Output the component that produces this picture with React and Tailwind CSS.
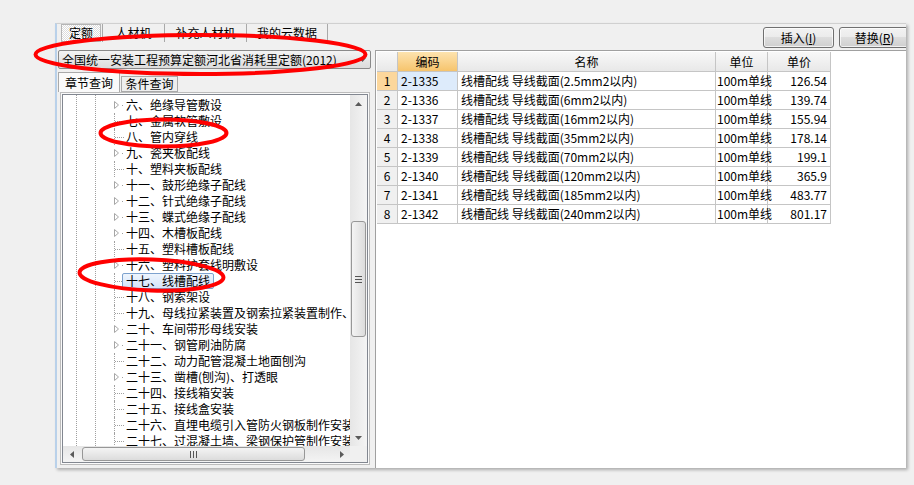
import React from "react";

const treeItems = [
  ["六、绝缘导管敷设", 1],
  ["七、金属软管敷设", 0],
  ["八、管内穿线", 0],
  ["九、瓷夹板配线", 1],
  ["十、塑料夹板配线", 0],
  ["十一、鼓形绝缘子配线", 1],
  ["十二、针式绝缘子配线", 1],
  ["十三、蝶式绝缘子配线", 1],
  ["十四、木槽板配线", 1],
  ["十五、塑料槽板配线", 0],
  ["十六、塑料护套线明敷设", 1],
  ["十七、线槽配线", 0, 1],
  ["十八、钢索架设", 0],
  ["十九、母线拉紧装置及钢索拉紧装置制作、", 0],
  ["二十、车间带形母线安装", 1],
  ["二十一、钢管刷油防腐", 1],
  ["二十二、动力配管混凝土地面刨沟", 0],
  ["二十三、凿槽(刨沟)、打透眼", 1],
  ["二十四、接线箱安装", 0],
  ["二十五、接线盒安装", 0],
  ["二十六、直埋电缆引入管防火钢板制作安装", 0],
  ["二十七、过混凝土墙、梁钢保护管制作安装", 0],
];

const rows = [
  ["2-1335", "线槽配线 导线截面(2.5mm2以内)", "126.54"],
  ["2-1336", "线槽配线 导线截面(6mm2以内)", "139.74"],
  ["2-1337", "线槽配线 导线截面(16mm2以内)", "155.94"],
  ["2-1338", "线槽配线 导线截面(35mm2以内)", "178.14"],
  ["2-1339", "线槽配线 导线截面(70mm2以内)", "199.1"],
  ["2-1340", "线槽配线 导线截面(120mm2以内)", "365.9"],
  ["2-1341", "线槽配线 导线截面(185mm2以内)", "483.77"],
  ["2-1342", "线槽配线 导线截面(240mm2以内)", "801.17"],
];

function Tri({ dir }) {
  const pts = {
    up: "0,4 3.5,0 7,4",
    down: "0,0 3.5,4 7,0",
    left: "4,0 0,3.5 4,7",
    right: "0,0 4,3.5 0,7",
  }[dir];
  const w = dir === "up" || dir === "down" ? 7 : 4;
  const h = dir === "up" || dir === "down" ? 4 : 7;
  return (
    <svg width={w} height={h} viewBox={`0 0 ${w} ${h}`}>
      <polygon points={pts} fill="#5a5a5a" />
    </svg>
  );
}

function TreeRow({ text, exp, sel }) {
  return (
    <div className="flex h-[16px] items-center whitespace-nowrap">
      {exp ? (
        <div className="w-[12px] h-[16px] shrink-0">
          <svg width="12" height="16" viewBox="0 0 12 16">
            <polygon points="-0.5,4.5 3.5,8 -0.5,11.5" transform="translate(1,0)" fill="#fff" stroke="#a6a6a6" strokeWidth="1" />
            <rect x="8" y="8" width="1" height="1" fill="#a0a0a0" />
          </svg>
        </div>
      ) : (
        <div className="w-[12px] h-[16px] shrink-0 border-l border-dotted border-[#a0a0a0] flex items-center">
          <div className="w-[9px] border-t border-dotted border-[#a0a0a0]" />
        </div>
      )}
      <span
        className={
          "-ml-[4px] h-[16px] px-[3px] leading-[14px] border rounded-[2px] " +
          (sel
            ? "border-[#7da2ce] bg-linear-to-b from-[#eef5fd] to-[#d5e5fa]"
            : "border-transparent")
        }
      >
        {text}
      </span>
    </div>
  );
}

function Btn({ children }) {
  return (
    <div className="w-[71px] h-[21px] shrink-0 border border-[#707070] rounded-[3px] bg-[linear-gradient(#f2f2f2,#ebebeb_50%,#dddddd_50%,#cfcfcf)] flex items-center justify-center leading-[14px] shadow-[inset_0_0_0_1px_rgba(255,255,255,0.7)]">
      {children}
    </div>
  );
}

export default function App() {
  return (
    <div className="relative w-[914px] h-[485px] overflow-hidden bg-[#f0f0f0] pt-[23px] pl-[55px] text-[12px] text-black font-['Noto_Sans_CJK_SC',sans-serif]">
      <div className="w-[851px] h-[445px] bg-[#f0f0f0] border-l-2 border-l-[#b9d1ea] border-t border-t-[#d0d0d0] shadow-[2px_2px_3px_rgba(0,0,0,0.28)] flex">
        {/* Left column */}
        <div className="w-[315px] shrink-0 flex flex-col">
          {/* tabs */}
          <div className="flex ml-[4px] h-[18px]">
            <div className="w-[40px] h-[18px] border border-[#b5b5b5] bg-[image:repeating-conic-gradient(#dcdcdc_0%_25%,#ffffff_0%_50%)] bg-[length:2px_2px] flex items-center justify-center leading-[14px]">
              定额
            </div>
            <div className="ml-[1px] w-[63px] border-l border-r border-[#a9a9a9] flex items-center justify-center leading-[14px]">
              人材机
            </div>
            <div className="w-[82px] border-r border-[#a9a9a9] flex items-center justify-center leading-[14px]">
              补充人材机
            </div>
            <div className="w-[81px] border-r border-[#a9a9a9] flex items-center justify-center leading-[14px]">
              我的云数据
            </div>
          </div>
          {/* dropdown */}
          <div className="mt-[8px] ml-[1px] w-[313px] h-[19px] border border-[#8a8a8a] rounded-[2px] bg-linear-to-b from-[#f4f4f4] to-[#dcdcdc] flex items-center pl-[3px] pr-[4px] leading-[14px]">
            <span className="flex-1 whitespace-nowrap">全国统一安装工程预算定额河北省消耗里定额(2012)</span>
            <Tri dir="down" />
          </div>
          {/* sub tabs */}
          <div className="mt-[3px] ml-[1px] h-[20px] flex items-end">
            <div className="w-[62px] h-[20px] border border-b-0 border-[#a9a9a9] bg-[#fafafa] flex items-center justify-center leading-[14px]">
              章节查询
            </div>
            <div className="ml-[1px] w-[57px] h-[16px] border border-[#a9a9a9] bg-[#eeeeee] flex items-center justify-center leading-[14px]">
              条件查询
            </div>
          </div>
          {/* tree panel */}
          <div className="ml-[3px] w-[310px] h-[373px] border border-[#bcbcbc] bg-[#fafafa] p-[1px]">
            <div className="h-full border border-[#828790] bg-white flex flex-col">
              <div className="flex-1 flex min-h-0">
                {/* content */}
                <div className="flex-1 min-w-0 overflow-hidden flex">
                  <div className="w-[13px] shrink-0" />
                  <div className="w-[19px] shrink-0 border-l border-dotted border-[#a0a0a0]" />
                  <div className="w-[19px] shrink-0 border-l border-dotted border-[#a0a0a0]" />
                  <div className="flex-1 min-w-0 pt-[2px] flex flex-col">
                    {treeItems.map(([t, e, s], i) => (
                      <TreeRow key={i} text={t} exp={e} sel={s} />
                    ))}
                  </div>
                </div>
                {/* vertical scrollbar */}
                <div className="w-[17px] shrink-0 bg-linear-to-r from-[#e6e6e6] to-[#f4f4f4] flex flex-col">
                  <div className="h-[17px] flex items-center justify-center">
                    <Tri dir="up" />
                  </div>
                  <div className="h-[109px]" />
                  <div className="mx-[1px] h-[116px] border border-[#979797] rounded-[3px] bg-linear-to-r from-[#f4f4f4] to-[#dcdcdc] flex flex-col items-center justify-center gap-[2px]">
                    <div className="w-[7px] h-px bg-[#555]" />
                    <div className="w-[7px] h-px bg-[#555]" />
                    <div className="w-[7px] h-px bg-[#555]" />
                  </div>
                  <div className="flex-1" />
                  <div className="h-[17px] flex items-center justify-center">
                    <Tri dir="down" />
                  </div>
                </div>
              </div>
              {/* horizontal scrollbar */}
              <div className="h-[16px] flex shrink-0">
                <div className="flex-1 bg-linear-to-b from-[#e6e6e6] to-[#f4f4f4] flex items-center">
                  <div className="w-[18px] h-full flex items-center justify-center">
                    <Tri dir="left" />
                  </div>
                  <div className="ml-[1px] w-[223px] h-[14px] border border-[#979797] rounded-[3px] bg-linear-to-b from-[#f4f4f4] to-[#dcdcdc] flex items-center justify-center gap-[2px]">
                    <div className="w-px h-[7px] bg-[#555]" />
                    <div className="w-px h-[7px] bg-[#555]" />
                    <div className="w-px h-[7px] bg-[#555]" />
                  </div>
                  <div className="flex-1" />
                  <div className="w-[17px] h-full flex items-center justify-center">
                    <Tri dir="right" />
                  </div>
                </div>
                <div className="w-[17px] bg-[#f0f0f0]" />
              </div>
            </div>
          </div>
        </div>

        {/* Right column */}
        <div className="flex-1 min-w-0 overflow-hidden flex flex-col">
          <div className="mt-[3px] h-[21px] flex gap-[5px] pl-[391px]">
            <Btn>
              插入(<span className="underline">I</span>)
            </Btn>
            <Btn>
              替换(<span className="underline">R</span>)
            </Btn>
          </div>
          <div className="mt-[2px] ml-[3px] flex-1 bg-white border-l border-t border-[#a0a0a0] pt-[1px] pl-[1px]">
            <div className="w-[454px] leading-[16px]">
              <div className="flex h-[20px]">
                <div className="w-[21px] border-r border-b border-[#c5c5c5] bg-linear-to-b from-[#f8f8f8] to-[#e8e8e8]" />
                <div className="w-[60px] border-r border-b border-[#c5c5c5] bg-linear-to-b from-[#fde3ae] to-[#f6c46c] flex items-center justify-center">编码</div>
                <div className="w-[258px] border-r border-b border-[#c5c5c5] bg-linear-to-b from-[#f8f8f8] to-[#e8e8e8] flex items-center justify-center">名称</div>
                <div className="w-[52px] border-r border-b border-[#c5c5c5] bg-linear-to-b from-[#f8f8f8] to-[#e8e8e8] flex items-center justify-center">单位</div>
                <div className="w-[63px] border-r border-b border-[#c5c5c5] bg-linear-to-b from-[#f8f8f8] to-[#e8e8e8] flex items-center justify-center">单价</div>
              </div>
              {rows.map(([code, name, price], i) => (
                <div key={i} className="flex h-[19px] whitespace-nowrap">
                  <div
                    className={
                      "w-[21px] border-r border-b border-[#c5c5c5] flex items-center justify-center " +
                      (i === 0 ? "bg-[#fcd79c]" : "bg-[#f0f0f0]")
                    }
                  >
                    {i + 1}
                  </div>
                  <div
                    className={
                      "w-[60px] border-r border-b border-[#c5c5c5] flex items-center pl-[3px] " +
                      (i === 0 ? "bg-[#ddebfb]" : "")
                    }
                  >
                    {code}
                  </div>
                  <div className="w-[258px] border-r border-b border-[#c5c5c5] flex items-center pl-[3px]">{name}</div>
                  <div className="w-[52px] border-r border-b border-[#c5c5c5] flex items-center pl-[1px]">100m单线</div>
                  <div className="w-[63px] border-r border-b border-[#c5c5c5] flex items-center justify-end pr-[3px]">{price}</div>
                </div>
              ))}
            </div>
          </div>
        </div>
      </div>

      {/* red annotation ellipses */}
      <svg className="absolute left-0 top-0 pointer-events-none" width="914" height="485" viewBox="0 0 914 485">
        <ellipse cx="200.5" cy="54.5" rx="165" ry="19.5" fill="none" stroke="#ff0000" strokeWidth="4" />
        <ellipse cx="163.5" cy="133" rx="63" ry="13.5" fill="none" stroke="#ff0000" strokeWidth="4" />
        <ellipse cx="151.5" cy="275" rx="72" ry="15.5" fill="none" stroke="#ff0000" strokeWidth="4" transform="rotate(2 151.5 275)" />
      </svg>
    </div>
  );
}
